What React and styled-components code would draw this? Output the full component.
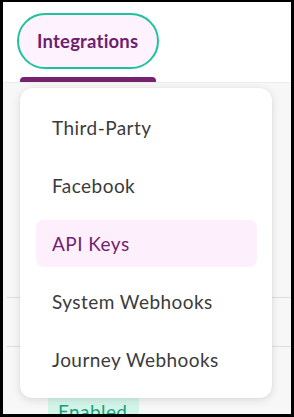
import React from "react";
import styled, { createGlobalStyle } from "styled-components";

const Global = createGlobalStyle`
  html, body { margin: 0; padding: 0; background: #000; }
  body { font-family: Lato, "Noto Sans", sans-serif; }
  * { box-sizing: border-box; }
`;

const Frame = styled.div`
  position: relative;
  width: 294px;
  height: 417px;
  border-style: solid;
  border-color: #000;
  border-width: 2px 3px 3px 3px;
  overflow: hidden;
  background: #f7f7f7;
  display: flex;
  flex-direction: column;
`;

const Header = styled.div`
  height: 81px;
  background: #fff;
  border-bottom: 1px solid #ececec;
  padding: 11px 0 0 14px;
  display: flex;
  flex-direction: column;
  align-items: flex-start;
  flex-shrink: 0;
`;

const TabPill = styled.div`
  width: 142px;
  height: 57px;
  border: 2.5px solid #1fc29f;
  border-radius: 29px;
  background: #fdf2fd;
  display: flex;
  align-items: center;
  padding-left: 18px;
  color: #6d1f6f;
  font-weight: 700;
  font-size: 18.5px;
  letter-spacing: 0.2px;
`;

const TabBar = styled.div`
  margin-top: 8px;
  margin-left: 3px;
  width: 136px;
  height: 5px;
  background: #76226f;
  border-radius: 4px 4px 0 0;
`;

const Content = styled.div`
  flex: 1;
  display: flex;
  flex-direction: column;
  padding-left: 4px;
`;

const Row = styled.div`
  height: ${(p) => p.$h}px;
  border-bottom: ${(p) => (p.$line ? "1px solid #dedede" : "none")};
  display: flex;
  align-items: flex-start;
  padding-left: 41px;
  flex-shrink: 0;
`;

const Badge = styled.div`
  margin-top: 50px;
  width: 91px;
  height: 26px;
  background: #d3f5e9;
  color: #17a07f;
  font-size: 19px;
  letter-spacing: 0.4px;
  padding: 3px 0 0 10px;
`;

const Menu = styled.div`
  position: absolute;
  left: 17px;
  top: 86px;
  width: 252px;
  height: 310px;
  background: #fff;
  border-radius: 12px;
  box-shadow: 0 2px 8px rgba(0, 0, 0, 0.12), 0 0 1px rgba(0, 0, 0, 0.12);
  padding: 16px 15px 15px 16px;
  display: flex;
  flex-direction: column;
  gap: 11px;
`;

const Item = styled.div`
  height: 47px;
  border-radius: 8px;
  display: flex;
  align-items: center;
  padding-left: 16px;
  font-size: 19px;
  letter-spacing: 0.45px;
  color: ${(p) => (p.$active ? "#701f72" : "#3b3b3b")};
  background: ${(p) => (p.$active ? "#fdf0fc" : "transparent")};
`;

const items = ["Third-Party", "Facebook", "API Keys", "System Webhooks", "Journey Webhooks"];

export default function App() {
  return (
    <>
      <Global />
      <Frame>
        <Header>
          <TabPill>Integrations</TabPill>
          <TabBar />
        </Header>
        <Content>
          <Row $h={215} $line />
          <Row $h={49} $line />
          <Row $h={80}>
            <Badge>Enabled</Badge>
          </Row>
        </Content>
        <Menu>
          {items.map((t) => (
            <Item key={t} $active={t === "API Keys"}>
              {t}
            </Item>
          ))}
        </Menu>
      </Frame>
    </>
  );
}
